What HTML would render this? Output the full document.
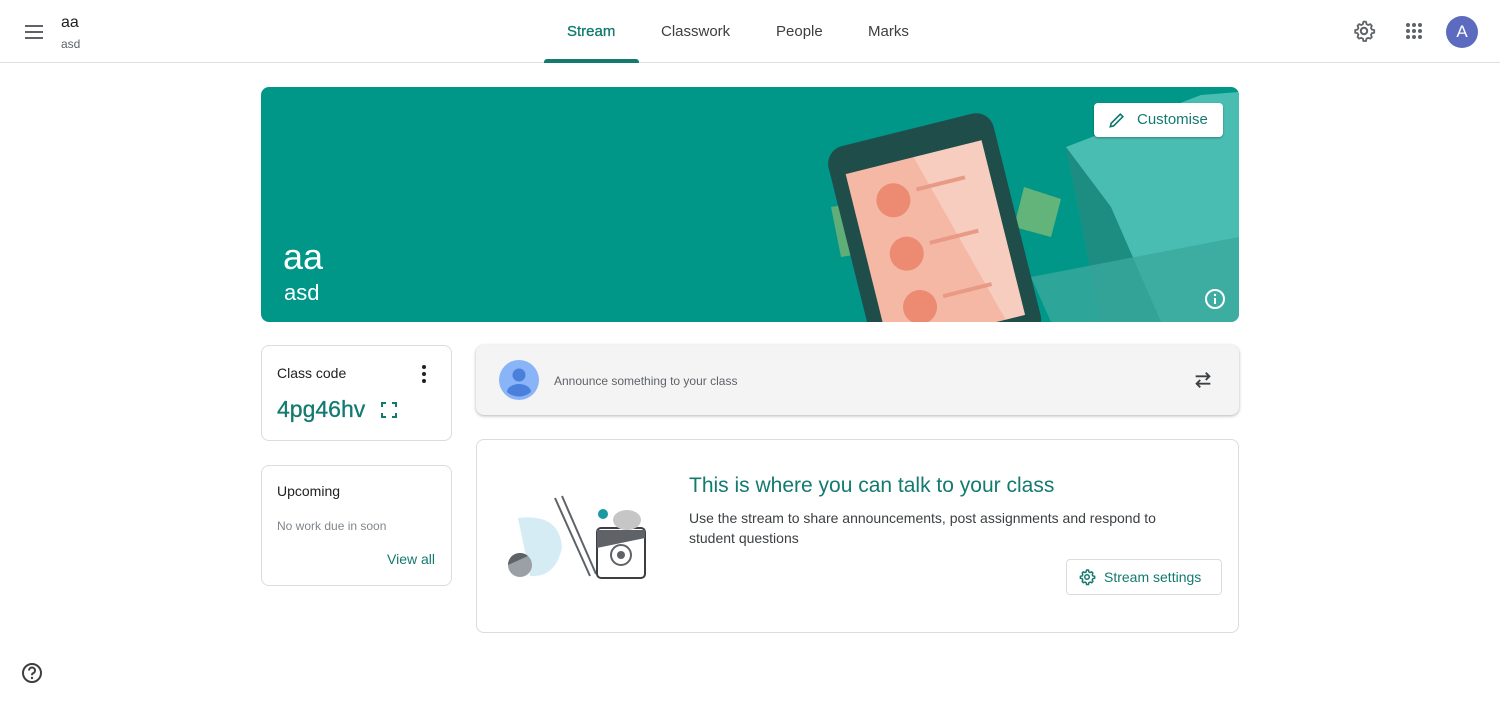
<!DOCTYPE html>
<html><head><meta charset="utf-8"><style>
*{box-sizing:border-box;margin:0;padding:0}
body{width:1500px;height:705px;background:#fff;font-family:"Liberation Sans",Arial,sans-serif;color:#3c4043;position:relative;overflow:hidden}
.abs{position:absolute}
.hdr{left:0;top:0;width:1500px;height:63px;border-bottom:1px solid #e0e0e0}
.tab{top:23px;font-size:15px;color:#3c4043}
.card{border:1px solid #dadce0;border-radius:8px;background:#fff}
</style></head><body>
<div class="abs hdr"></div>
<svg class="abs" style="left:22px;top:20px" width="24" height="24" viewBox="0 0 24 24"><path d="M3 6h18M3 12h18M3 18h18" stroke="#5f6368" stroke-width="2"/></svg>
<div class="abs" style="left:61px;top:14px;font-size:16px;color:#202124">aa</div>
<div class="abs" style="left:61px;top:37px;font-size:12px;color:#5f6368">asd</div>
<div class="abs tab" style="left:567px;color:#137a6f;font-size:15px;-webkit-text-stroke:.3px #137a6f">Stream</div>
<div class="abs" style="left:544px;top:59px;width:95px;height:4px;background:#137a6f;border-radius:3px 3px 0 0"></div>
<div class="abs tab" style="left:661px">Classwork</div>
<div class="abs tab" style="left:776px">People</div>
<div class="abs tab" style="left:868px">Marks</div>
<svg class="abs" style="left:1352px;top:19px" width="24" height="24" viewBox="0 0 24 24"><circle cx="12" cy="12" r="3.2" fill="none" stroke="#5f6368" stroke-width="2"/><path d="M12 2.5l2 .3.5 2.3 1.6.9 2.2-.8 1.5 1.6-.8 2.2.9 1.6 2.3.5v2.6l-2.3.5-.9 1.6.8 2.2-1.5 1.6-2.2-.8-1.6.9-.5 2.3h-2.6l-.5-2.3-1.6-.9-2.2.8-1.5-1.6.8-2.2-.9-1.6-2.3-.5v-2.6l2.3-.5.9-1.6-.8-2.2 1.5-1.6 2.2.8 1.6-.9.5-2.3z" fill="none" stroke="#5f6368" stroke-width="1.8"/></svg>
<svg class="abs" style="left:1405px;top:22px" width="18" height="18" viewBox="0 0 18 18" fill="#5f6368"><circle cx="3" cy="3" r="2"/><circle cx="9" cy="3" r="2"/><circle cx="15" cy="3" r="2"/><circle cx="3" cy="9" r="2"/><circle cx="9" cy="9" r="2"/><circle cx="15" cy="9" r="2"/><circle cx="3" cy="15" r="2"/><circle cx="9" cy="15" r="2"/><circle cx="15" cy="15" r="2"/></svg>
<div class="abs" style="left:1446px;top:16px;width:32px;height:32px;border-radius:50%;background:#5c6bc0;color:#fff;font-size:17px;text-align:center;line-height:32px">A</div>

<div class="abs" style="left:261px;top:87px;width:978px;height:235px;border-radius:8px;overflow:hidden;background:#009688">
<svg width="978" height="235" viewBox="0 0 978 235">
<polygon points="805,60 940,8 978,5 978,235 840,235" fill="#5cc7bd" opacity=".8"/>
<polygon points="805,60 840,235 900,235 850,120" fill="#0a776c" opacity=".7"/>
<polygon points="770,190 978,150 978,235 790,235" fill="#3aa99e" opacity=".8"/>
<polygon points="570,120 600,115 610,165 580,170" fill="#5fae77"/>
<polygon points="763,100 800,112 790,150 753,140" fill="#62b47a"/>
<g transform="rotate(-14 670 140)"><rect x="585" y="40" width="170" height="230" rx="18" fill="#1f4d4a"/><rect x="600" y="68" width="140" height="180" fill="#f4b8a5"/><polygon points="670,68 740,68 740,248 720,248" fill="#fff" opacity=".3"/><circle cx="640" cy="105" r="17" fill="#ec8a72"/><circle cx="640" cy="160" r="17" fill="#ec8a72"/><circle cx="640" cy="215" r="17" fill="#ec8a72"/><rect x="665" y="98" width="50" height="4" fill="#e89a86"/><rect x="665" y="153" width="50" height="4" fill="#e89a86"/><rect x="665" y="208" width="50" height="4" fill="#e89a86"/></g>
</svg>
</div>
<div class="abs" style="left:283px;top:236px;font-size:36px;color:#fff">aa</div>
<div class="abs" style="left:284px;top:280px;font-size:22px;color:#fff">asd</div>
<div class="abs" style="left:1094px;top:103px;width:129px;height:34px;background:#fff;border-radius:4px;box-shadow:0 1px 2px rgba(0,0,0,.3)"></div>
<svg class="abs" style="left:1107px;top:110px" width="20" height="20" viewBox="0 0 24 24"><path d="M4 20l1-4L16 5l3 3L8 19z" fill="none" stroke="#137a6f" stroke-width="2"/></svg>
<div class="abs" style="left:1137px;top:111px;font-size:15px;color:#137a6f">Customise</div>
<svg class="abs" style="left:1204px;top:288px" width="22" height="22" viewBox="0 0 22 22"><circle cx="11" cy="11" r="9" fill="none" stroke="#fff" stroke-width="2"/><path d="M11 10v6" stroke="#fff" stroke-width="2"/><circle cx="11" cy="7" r="1.2" fill="#fff"/></svg>

<div class="abs card" style="left:261px;top:345px;width:191px;height:96px"></div>
<div class="abs" style="left:277px;top:365px;font-size:14px;color:#202124">Class code</div>
<svg class="abs" style="left:420px;top:364px" width="8" height="20"><circle cx="4" cy="3" r="2" fill="#202124"/><circle cx="4" cy="10" r="2" fill="#202124"/><circle cx="4" cy="17" r="2" fill="#202124"/></svg>
<div class="abs" style="left:277px;top:396px;font-size:23px;color:#137a6f;-webkit-text-stroke:.3px #137a6f">4pg46hv</div>
<svg class="abs" style="left:381px;top:402px" width="16" height="16" viewBox="0 0 16 16"><path d="M1 5V1h4M11 1h4v4M15 11v4h-4M5 15H1v-4" fill="none" stroke="#137a6f" stroke-width="2"/></svg>

<div class="abs card" style="left:261px;top:465px;width:191px;height:121px"></div>
<div class="abs" style="left:277px;top:483px;font-size:14px;color:#202124">Upcoming</div>
<div class="abs" style="left:277px;top:519px;font-size:12px;color:#80868b">No work due in soon</div>
<div class="abs" style="left:387px;top:551px;font-size:14px;color:#137a6f">View all</div>

<div class="abs" style="left:476px;top:345px;width:763px;height:70px;background:#f4f4f4;border-radius:8px;box-shadow:0 1px 3px rgba(0,0,0,.3)"></div>
<svg class="abs" style="left:499px;top:360px" width="40" height="40" viewBox="0 0 40 40"><circle cx="20" cy="20" r="20" fill="#8ab4f8"/><circle cx="20" cy="15" r="6.5" fill="#4a7fdc"/><path d="M8 32a12 8 0 0 1 24 0a18 18 0 0 1-24 0z" fill="#4a7fdc"/></svg>
<div class="abs" style="left:554px;top:374px;font-size:12px;color:#5f6368">Announce something to your class</div>
<svg class="abs" style="left:1192px;top:369px" width="22" height="22" viewBox="0 0 24 24"><path d="M4 8h15M15 4l4 4-4 4M20 16H5M9 12l-4 4 4 4" fill="none" stroke="#3c4043" stroke-width="2"/></svg>

<div class="abs card" style="left:476px;top:439px;width:763px;height:194px"></div>
<svg class="abs" style="left:500px;top:488px" width="155" height="95" viewBox="0 0 155 95">
<path d="M18 30 Q60 25 62 60 Q55 90 30 88z" fill="#d6ecf5"/>
<line x1="55" y1="10" x2="90" y2="88" stroke="#5f6368" stroke-width="2"/><line x1="62" y1="8" x2="96" y2="86" stroke="#5f6368" stroke-width="2"/>
<circle cx="20" cy="77" r="12" fill="#9aa0a6"/><path d="M8 77a12 12 0 0 1 20-9z" fill="#5f6368"/>
<rect x="97" y="40" width="48" height="50" rx="4" fill="#fff" stroke="#3c4043" stroke-width="2"/><path d="M97 60 L145 50 V42 H97z" fill="#5f6368"/><circle cx="121" cy="67" r="10" fill="none" stroke="#5f6368" stroke-width="2"/><circle cx="121" cy="67" r="4" fill="#5f6368"/>
<ellipse cx="127" cy="32" rx="14" ry="10" fill="#c6c6c6"/><circle cx="103" cy="26" r="5" fill="#1a9aa0"/>
</svg>
<div class="abs" style="left:689px;top:474px;font-size:21px;color:#137a6f">This is where you can talk to your class</div>
<div class="abs" style="left:689px;top:508px;width:500px;font-size:14px;line-height:20px;color:#3c4043">Use the stream to share announcements, post assignments and respond to student questions</div>
<div class="abs" style="left:1066px;top:559px;width:156px;height:36px;border:1px solid #dadce0;border-radius:4px"></div>
<svg class="abs" style="left:1078px;top:568px" width="18" height="18" viewBox="0 0 24 24"><circle cx="12" cy="12" r="3" fill="none" stroke="#137a6f" stroke-width="2"/><path d="M12 2.5l2 .3.5 2.3 1.6.9 2.2-.8 1.5 1.6-.8 2.2.9 1.6 2.3.5v2.6l-2.3.5-.9 1.6.8 2.2-1.5 1.6-2.2-.8-1.6.9-.5 2.3h-2.6l-.5-2.3-1.6-.9-2.2.8-1.5-1.6.8-2.2-.9-1.6-2.3-.5v-2.6l2.3-.5.9-1.6-.8-2.2 1.5-1.6 2.2.8 1.6-.9.5-2.3z" fill="none" stroke="#137a6f" stroke-width="2"/></svg>
<div class="abs" style="left:1104px;top:569px;font-size:14px;color:#137a6f">Stream settings</div>

<svg class="abs" style="left:21px;top:662px" width="22" height="22" viewBox="0 0 22 22"><circle cx="11" cy="11" r="9" fill="none" stroke="#3c4043" stroke-width="2"/><path d="M8 8.5a3 3 0 1 1 4 2.8c-1 .4-1 1-1 2" fill="none" stroke="#3c4043" stroke-width="2"/><circle cx="11" cy="16" r="1.2" fill="#3c4043"/></svg>
</body></html>
